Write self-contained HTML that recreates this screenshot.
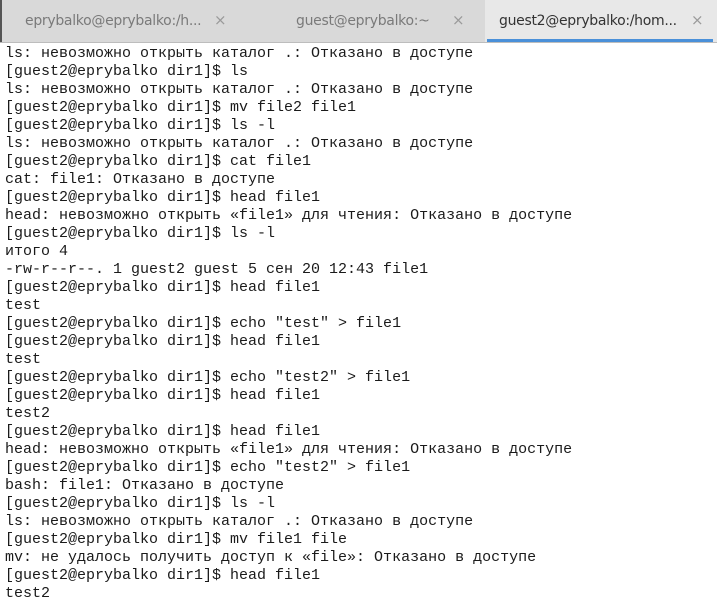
<!DOCTYPE html>
<html><head><meta charset="utf-8"><style>
html,body{margin:0;padding:0;width:717px;height:601px;overflow:hidden;background:#fff;}
#tabs{position:absolute;left:0;top:0;width:717px;height:42px;background:#d9d9d9;border-bottom:1px solid #bdbdbd;font-family:"DejaVu Sans","Liberation Sans",sans-serif;font-size:14px;color:#7a7a7a;}
#tabs .t{position:absolute;top:13px;white-space:nowrap;letter-spacing:-0.3px}
#tabs .x{position:absolute;top:11px;font-size:15px;color:#9a9a9a}
#act{position:absolute;left:485px;top:0;width:232px;height:42px;background:#e8e8e8;}
#ul{position:absolute;left:487px;top:39px;width:226px;height:3px;background:#4a90d9}
#lb{position:absolute;left:0;top:0;width:2px;height:42px;background:#555}
#term{position:absolute;left:5px;top:45px;margin:0;font-family:"Liberation Mono","DejaVu Sans Mono",monospace;font-size:15px;line-height:18px;color:#1a1a1a;white-space:pre;}
</style></head><body>
<div id="tabs">
<div id="act"></div><div id="ul"></div><div id="lb"></div>
<span class="t" style="left:25px">eprybalko@eprybalko:/h...</span><span class="x" style="left:214px">×</span>
<span class="t" style="left:296px">guest@eprybalko:~</span><span class="x" style="left:452px">×</span>
<span class="t" style="left:499px;color:#333">guest2@eprybalko:/hom...</span><span class="x" style="left:691px">×</span>
</div>
<pre id="term">ls: невозможно открыть каталог .: Отказано в доступе
[guest2@eprybalko dir1]$ ls
ls: невозможно открыть каталог .: Отказано в доступе
[guest2@eprybalko dir1]$ mv file2 file1
[guest2@eprybalko dir1]$ ls -l
ls: невозможно открыть каталог .: Отказано в доступе
[guest2@eprybalko dir1]$ cat file1
cat: file1: Отказано в доступе
[guest2@eprybalko dir1]$ head file1
head: невозможно открыть «file1» для чтения: Отказано в доступе
[guest2@eprybalko dir1]$ ls -l
итого 4
-rw-r--r--. 1 guest2 guest 5 сен 20 12:43 file1
[guest2@eprybalko dir1]$ head file1
test
[guest2@eprybalko dir1]$ echo "test" &gt; file1
[guest2@eprybalko dir1]$ head file1
test
[guest2@eprybalko dir1]$ echo "test2" &gt; file1
[guest2@eprybalko dir1]$ head file1
test2
[guest2@eprybalko dir1]$ head file1
head: невозможно открыть «file1» для чтения: Отказано в доступе
[guest2@eprybalko dir1]$ echo "test2" &gt; file1
bash: file1: Отказано в доступе
[guest2@eprybalko dir1]$ ls -l
ls: невозможно открыть каталог .: Отказано в доступе
[guest2@eprybalko dir1]$ mv file1 file
mv: не удалось получить доступ к «file»: Отказано в доступе
[guest2@eprybalko dir1]$ head file1
test2</pre>
</body></html>
